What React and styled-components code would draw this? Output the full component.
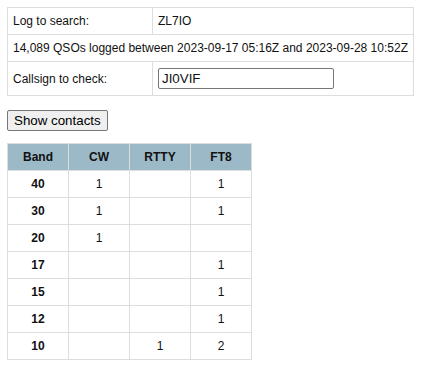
import React from 'react';
import styled, { createGlobalStyle } from 'styled-components';

const GlobalStyle = createGlobalStyle`
  body {
    margin: 7px;
    background: #fff;
    font-family: "Liberation Sans", Arial, sans-serif;
    font-size: 12px;
    color: #111;
  }
`;

const SearchTable = styled.table`
  border-collapse: collapse;
  td {
    border: 1px solid #ddd;
    padding: 6px 5px;
    line-height: 14px;
    text-align: left;
    white-space: nowrap;
  }
  td.label {
    width: 134px;
  }
`;

const CallInput = styled.input`
  width: 176px;
  height: 21px;
  box-sizing: border-box;
  border: 1px solid #767676;
  border-radius: 2px;
  padding: 1px 3px;
  font-family: "Liberation Sans", Arial, sans-serif;
  font-size: 13.333px;
  color: #111;
  vertical-align: middle;
`;

const ShowButton = styled.button`
  margin: 14px 0 12px;
  display: block;
  height: 21px;
  padding: 1px 6px;
  font-family: "Liberation Sans", Arial, sans-serif;
  font-size: 13.333px;
  color: #000;
  background: #efefef;
  border: 1px solid #767676;
  border-radius: 2px;
`;

const BandTable = styled.table`
  border-collapse: collapse;
  th,
  td {
    border: 1px solid #ddd;
    width: 50px;
    padding: 6px 5px;
    line-height: 14px;
    text-align: center;
  }
  th {
    background: #9bb9c6;
    font-weight: bold;
  }
`;

const BandCell = styled.td`
  font-weight: bold;
`;

const modes = ['CW', 'RTTY', 'FT8'];
const rows = [
  ['40', '1', '', '1'],
  ['30', '1', '', '1'],
  ['20', '1', '', ''],
  ['17', '', '', '1'],
  ['15', '', '', '1'],
  ['12', '', '', '1'],
  ['10', '', '1', '2'],
];

export default function App() {
  return (
    <>
      <GlobalStyle />
      <SearchTable>
        <tbody>
          <tr>
            <td className="label">Log to search:</td>
            <td>ZL7IO</td>
          </tr>
          <tr>
            <td colSpan={2}>
              14,089 QSOs logged between 2023-09-17 05:16Z and 2023-09-28 10:52Z
            </td>
          </tr>
          <tr>
            <td className="label">Callsign to check:</td>
            <td>
              <CallInput defaultValue="JI0VIF" />
            </td>
          </tr>
        </tbody>
      </SearchTable>
      <ShowButton>Show contacts</ShowButton>
      <BandTable>
        <thead>
          <tr>
            <th>Band</th>
            {modes.map((m) => (
              <th key={m}>{m}</th>
            ))}
          </tr>
        </thead>
        <tbody>
          {rows.map(([band, ...counts]) => (
            <tr key={band}>
              <BandCell>{band}</BandCell>
              {counts.map((c, i) => (
                <td key={i}>{c}</td>
              ))}
            </tr>
          ))}
        </tbody>
      </BandTable>
    </>
  );
}
